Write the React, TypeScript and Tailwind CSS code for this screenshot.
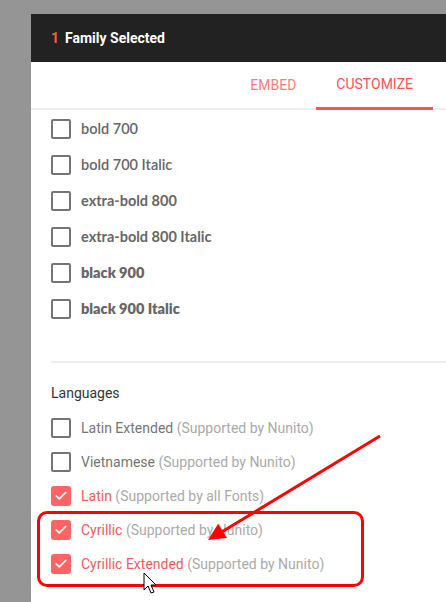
import { Check } from 'lucide-react';

const styles = [
  { label: 'bold 700', cls: 'font-semibold' },
  { label: 'bold 700 Italic', cls: 'font-semibold' },
  { label: 'extra-bold 800', cls: 'font-bold' },
  { label: 'extra-bold 800 Italic', cls: 'font-bold' },
  { label: 'black 900', cls: 'font-extrabold' },
  { label: 'black 900 Italic', cls: 'font-extrabold' },
];

const languages = [
  { name: 'Latin Extended', note: '(Supported by Nunito)', checked: false },
  { name: 'Vietnamese', note: '(Supported by Nunito)', checked: false },
  { name: 'Latin', note: '(Supported by all Fonts)', checked: true },
  { name: 'Cyrillic', note: '(Supported by Nunito)', checked: true },
  { name: 'Cyrillic Extended', note: '(Supported by Nunito)', checked: true },
];

function Box({ checked }: { checked?: boolean }) {
  if (checked) {
    return (
      <span className="w-[20px] h-[20px] rounded-[3px] bg-[#ff6464] flex items-center justify-center shrink-0">
        <Check className="w-[14px] h-[14px] text-white" strokeWidth={3} />
      </span>
    );
  }
  return <span className="w-[20px] h-[20px] rounded-[2px] border-2 border-[#757575] shrink-0" />;
}

export default function App() {
  return (
    <div className="relative w-[446px] h-[602px] overflow-hidden bg-[#959595] pl-[31px] pt-[14px] font-['Roboto',sans-serif]">
      <div className="bg-white w-[440px] h-[620px] flex flex-col">
        <div className="h-[48px] bg-[#222222] flex items-center pl-[20px] text-[14px] font-bold">
          <span className="text-[#e8643f] mr-[6px]">1</span>
          <span className="text-white">Family Selected</span>
        </div>

        <div className="h-[48px] flex justify-end pr-[38px] border-b-2 border-[#eeeeee] text-[14px]">
          <div className="px-[20px] flex items-center text-[#ff7b7b]">EMBED</div>
          <div className="px-[20px] flex items-center text-[#ff5252] border-b-[3px] border-[#ff5252] -mb-[2px]">
            CUSTOMIZE
          </div>
        </div>

        <div className="pl-[20px]">
          <div className="pt-[1px]">
            {styles.map((s) => (
              <div key={s.label} className="h-[36px] flex items-center gap-[10px]">
                <Box />
                <span className={`text-[14.5px] text-[#666666] font-['Lato',sans-serif] ${s.cls}`}>{s.label}</span>
              </div>
            ))}
          </div>

          <div className="mt-[34px] h-[2px] bg-[#eeeeee]" />

          <div className="mt-[20px] text-[14px] text-[#333333] h-[20px] leading-[20px]">Languages</div>

          <div className="mt-[8px]">
            {languages.map((l) => (
              <div key={l.name} className="h-[34px] flex items-center gap-[10px] text-[14px]">
                <Box checked={l.checked} />
                <span>
                  <span className={l.checked ? 'text-[#f45b5b]' : 'text-[#757575]'}>{l.name}</span>{' '}
                  <span className="text-[#aaaaaa]">{l.note}</span>
                </span>
              </div>
            ))}
          </div>
        </div>
      </div>

      <div className="absolute left-[37px] top-[511px] w-[327px] h-[76px] border-[3px] border-[#ff0000] rounded-[10px]" />

      <svg className="absolute left-0 top-0" width="446" height="602" viewBox="0 0 446 602">
        <line x1="380" y1="436" x2="220" y2="533" stroke="#ff0000" strokeWidth="3" />
        <polygon points="208,540 218,524 227,538" fill="#ff0000" />
        <path
          d="M144 573 L144 590 L148 586 L151 593 L154 592 L151 585 L156 585 Z"
          fill="#ffffff"
          stroke="#000000"
          strokeWidth="1"
        />
      </svg>
    </div>
  );
}
